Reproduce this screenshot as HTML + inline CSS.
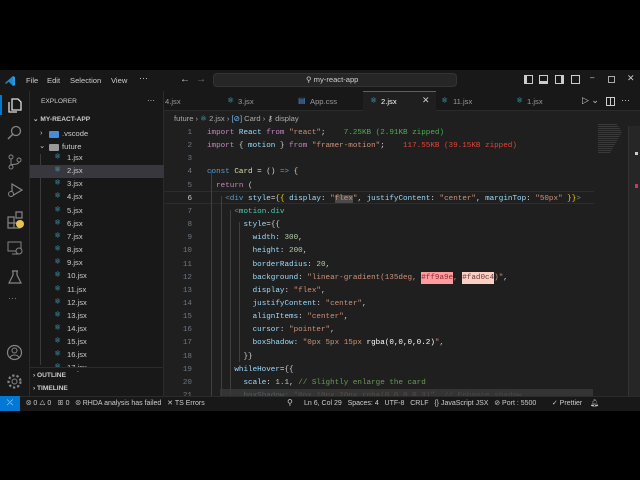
<!DOCTYPE html>
<html><head><meta charset="utf-8"><style>
*{margin:0;padding:0;box-sizing:border-box}
body{width:640px;height:480px;background:#000;position:relative;overflow:hidden;font-family:"Liberation Sans",sans-serif;color:#ccc;font-size:8px}
.a{position:absolute;white-space:pre}
#vs{position:absolute;left:0;top:70px;width:640px;height:341px;background:#1f1f1f;overflow:hidden}
.code{font-family:"Liberation Mono",monospace;font-size:7.6px;color:#d4d4d4}
.k{color:#c586c0}.b{color:#569cd6}.v{color:#9cdcfe}.s{color:#ce9178}.n{color:#b5cea8}.f{color:#dcdcaa}.t{color:#4ec9b0}.c{color:#6a9955}.g{color:#808080}.y{color:#ffd700}
.ln{color:#6e7681;font-family:"Liberation Mono",monospace;font-size:7.6px;text-align:right;width:20px}
.fi{color:#ccc;font-size:7.6px}
.ri{color:#4fc1e0;font-size:8px}
</style></head><body>
<div id="vs">
<div class="a" style="left:0;top:0;width:640px;height:21px;background:#181818"></div>
<svg class="a" style="left:4px;top:5px" width="12" height="12" viewBox="0 0 12 12"><path d="M9 1L4 6l5 5V1zM9 1L1 8l1 1 7-6" fill="#2489ca"/><path d="M9 1l2 1v8l-2 1z" fill="#1f9cf0"/></svg>
<div class="a" style="left:26px;top:6px;font-size:7.6px;color:#ccc">File</div>
<div class="a" style="left:47px;top:6px;font-size:7.6px;color:#ccc">Edit</div>
<div class="a" style="left:70px;top:6px;font-size:7.6px;color:#ccc">Selection</div>
<div class="a" style="left:111px;top:6px;font-size:7.6px;color:#ccc">View</div>
<div class="a" style="left:139px;top:3px;font-size:9px;color:#ccc">···</div>
<div class="a" style="left:180px;top:4px;font-size:10px;color:#ccc">←</div>
<div class="a" style="left:196px;top:4px;font-size:10px;color:#777">→</div>
<div class="a" style="left:213px;top:3px;width:244px;height:14px;background:#262626;border:1px solid #333;border-radius:4px"></div>
<div class="a" style="left:306px;top:5px;font-size:7.6px;color:#ccc">⚲ my-react-app</div>
<div class="a" style="left:524px;top:5px;width:9px;height:9px;border:1px solid #ccc;border-left-width:3px"></div>
<div class="a" style="left:539px;top:5px;width:9px;height:9px;border:1px solid #ccc;border-bottom-width:3px"></div>
<div class="a" style="left:555px;top:5px;width:9px;height:9px;border:1px solid #ccc;border-right-width:3px"></div>
<div class="a" style="left:571px;top:5px;width:9px;height:9px;border:1px solid #ccc"></div>
<div class="a" style="left:590px;top:3px;font-size:8px;color:#ccc">–</div>
<div class="a" style="left:608px;top:6px;width:7px;height:7px;border:1px solid #aaa"></div>
<div class="a" style="left:627px;top:3px;font-size:9px;color:#ccc">✕</div>
<div class="a" style="left:0;top:21px;width:30px;height:305px;background:#181818;border-right:1px solid #2b2b2b"></div>
<div class="a" style="left:0;top:25px;width:2px;height:20px;background:#0078d4"></div>
<svg class="a" style="left:7px;top:27px" width="16" height="16"><path d="M5 2h6l3 3v8H5z M2 5v10h8" stroke="#ddd" fill="none" stroke-width="1.3"/></svg>
<svg class="a" style="left:7px;top:55px" width="16" height="16"><circle cx="9" cy="6" r="4.5" stroke="#858585" fill="none" stroke-width="1.3"/><path d="M6 9l-5 5" stroke="#858585" stroke-width="1.5"/></svg>
<svg class="a" style="left:7px;top:84px" width="16" height="16"><circle cx="4" cy="3" r="2" stroke="#858585" fill="none"/><circle cx="4" cy="13" r="2" stroke="#858585" fill="none"/><circle cx="12" cy="6" r="2" stroke="#858585" fill="none"/><path d="M4 5v6M12 8c0 3-8 2-8 3" stroke="#858585" fill="none"/></svg>
<svg class="a" style="left:7px;top:112px" width="16" height="16"><path d="M5 2l10 6-10 6z" stroke="#858585" fill="none" stroke-width="1.2"/><circle cx="4" cy="12" r="2.5" fill="#181818" stroke="#858585"/></svg>
<svg class="a" style="left:7px;top:141px" width="18" height="18"><path d="M1 6h6v6H1zM7 12h6v5H7zM1 12h6v5H1zM9 1h6v6H9z" stroke="#858585" fill="none" stroke-width="1.2"/><circle cx="13" cy="13" r="4" fill="#e5c453"/></svg>
<svg class="a" style="left:7px;top:170px" width="16" height="16"><rect x="1" y="2" width="13" height="9" stroke="#858585" fill="none"/><path d="M5 14h6" stroke="#858585"/><circle cx="12" cy="11" r="3" fill="#181818" stroke="#858585"/></svg>
<svg class="a" style="left:8px;top:200px" width="14" height="14"><path d="M4 1h6M5 1v4L1 13h12L9 5V1" stroke="#858585" fill="none" stroke-width="1.2"/></svg>
<div class="a" style="left:8px;top:223px;font-size:9px;color:#858585">···</div>
<svg class="a" style="left:6px;top:274px" width="17" height="17"><circle cx="8.5" cy="8.5" r="7" stroke="#858585" fill="none" stroke-width="1.2"/><circle cx="8.5" cy="6.5" r="2.5" stroke="#858585" fill="none"/><path d="M4 14c1-4 8-4 9 0" stroke="#858585" fill="none"/></svg>
<svg class="a" style="left:6px;top:303px" width="17" height="17"><circle cx="8.5" cy="8.5" r="2.5" stroke="#858585" fill="none"/><circle cx="8.5" cy="8.5" r="6" stroke="#858585" fill="none" stroke-width="2.2" stroke-dasharray="2.3 2"/></svg>
<div class="a" style="left:30px;top:21px;width:134px;height:305px;background:#181818;border-right:1px solid #2b2b2b"></div>
<div class="a" style="left:41px;top:28px;font-size:6.6px;color:#ccc">EXPLORER</div>
<div class="a" style="left:147px;top:26px;font-size:8px;color:#ccc">···</div>
<div class="a" style="left:33px;top:45px;font-size:6.6px;color:#ccc;font-weight:bold">⌄ MY-REACT-APP</div>
<div class="a" style="left:40px;top:58px;font-size:7.6px;color:#ccc">›</div>
<div class="a" style="left:49px;top:61px;width:10px;height:7px;background:#4a8bd6;border-radius:1px"></div>
<div class="a fi" style="left:62px;top:59px">.vscode</div>
<div class="a" style="left:39px;top:71px;font-size:7.6px;color:#ccc">⌄</div>
<div class="a" style="left:49px;top:74px;width:10px;height:7px;background:#999;border-radius:1px"></div>
<div class="a fi" style="left:62px;top:72px">future</div>
<div class="a" style="left:40px;top:84px;width:1px;height:211px;background:#3a3a3a"></div>
<div class="a" style="left:30px;top:95px;width:134px;height:13px;background:#37373d"></div>
<div id="files"></div>
<div class="a" style="left:30px;top:297px;width:134px;height:1px;background:#2b2b2b"></div>
<div class="a" style="left:33px;top:302px;font-size:6.6px;color:#ccc;font-weight:bold">› OUTLINE</div>
<div class="a" style="left:33px;top:315px;font-size:6.6px;color:#ccc;font-weight:bold">› TIMELINE</div>
<div class="a" style="left:164px;top:21px;width:476px;height:20px;background:#181818;border-bottom:1px solid #2b2b2b"></div>
<div class="a fi" style="left:165px;top:27px;color:#999">4.jsx</div>
<div class="a ri" style="left:227px;top:26px">⚛</div><div class="a fi" style="left:238px;top:27px;color:#999">3.jsx</div>
<div class="a" style="left:298px;top:26px;font-size:8px;color:#4a8bd6">▤</div><div class="a fi" style="left:310px;top:27px;color:#999">App.css</div>
<div class="a" style="left:363px;top:21px;width:73px;height:20px;background:#1f1f1f;border-top:1px solid #0078d4"></div>
<div class="a ri" style="left:370px;top:26px">⚛</div><div class="a fi" style="left:381px;top:27px;color:#fff">2.jsx</div>
<div class="a" style="left:422px;top:25px;font-size:9px;color:#ccc">✕</div>
<div class="a ri" style="left:441px;top:26px">⚛</div><div class="a fi" style="left:453px;top:27px;color:#999">11.jsx</div>
<div class="a ri" style="left:516px;top:26px">⚛</div><div class="a fi" style="left:527px;top:27px;color:#999">1.jsx</div>
<div class="a" style="left:582px;top:25px;font-size:9px;color:#ccc">▷ ⌄</div>
<div class="a" style="left:606px;top:27px;width:9px;height:9px;border:1px solid #ccc"></div>
<div class="a" style="left:610px;top:27px;width:1px;height:9px;background:#ccc"></div>
<div class="a" style="left:621px;top:25px;font-size:9px;color:#ccc">···</div>
<div class="a fi" style="left:174px;top:44px;color:#aaa">future › <span style="color:#4fc1e0">⚛</span> 2.jsx › <span style="color:#75beff">[⊘]</span> Card › <span style="color:#ccc">⚷</span> display</div>
<div class="a" style="left:164px;top:121px;width:430px;height:13px;border-top:1px solid #2d2d2d;border-bottom:1px solid #2d2d2d"></div>
<div class="a" style="left:211px;top:100px;width:1px;height:226px;background:#404040"></div>
<div class="a" style="left:221px;top:126px;width:1px;height:200px;background:#404040"></div>
<div class="a" style="left:230px;top:140px;width:1px;height:186px;background:#404040"></div>
<div class="a" style="left:239px;top:152px;width:1px;height:140px;background:#404040"></div>
<div id="code"></div>
<div class="a" style="left:220px;top:319px;width:373px;height:7px;background:#3a3a3a;opacity:.8"></div>
<div class="a" style="left:598px;top:53px;width:30px;height:30px;background:repeating-linear-gradient(#1f1f1f 0 1px,#555 1px 2px);opacity:.5;clip-path:polygon(0 0,60% 0,80% 30%,40% 100%,0 100%)"></div>
<div class="a" style="left:628px;top:56px;width:12px;height:270px;background:#262626;border-left:1px solid #333"></div>
<div class="a" style="left:635px;top:82px;width:3px;height:3px;background:#ccc"></div>
<div class="a" style="left:635px;top:114px;width:3px;height:4px;background:#c36"></div>
<div class="a" style="left:0;top:326px;width:640px;height:15px;background:#181818;border-top:1px solid #2b2b2b"></div>
<div class="a" style="left:0;top:326px;width:20px;height:15px;background:#0078d4;color:#fff;font-size:8px;text-align:center;line-height:14px">⤫</div>
<div class="a" style="left:26px;top:329px;font-size:7px;color:#ccc">⊗ 0 △ 0 &nbsp;&nbsp;ꕥ 0 &nbsp;&nbsp;⊗ RHDA analysis has failed &nbsp;&nbsp;✕ TS Errors</div>
<div class="a" style="left:287px;top:328px;font-size:8px;color:#ccc">⚲</div>
<div class="a" style="left:304px;top:329px;font-size:7px;color:#ccc">Ln 6, Col 29 &nbsp;&nbsp;Spaces: 4 &nbsp;&nbsp;UTF-8 &nbsp;&nbsp;CRLF &nbsp;&nbsp;{} JavaScript JSX &nbsp;&nbsp;⊘ Port : 5500 &nbsp;&nbsp;&nbsp;&nbsp;&nbsp;&nbsp;&nbsp;✓ Prettier &nbsp;&nbsp;&nbsp;🔔︎</div>
</div>
<script>
var f="";for(var i=1;i<=17;i++){var y=83+(i-1)*13.15;f+='<div class="a ri" style="left:54px;top:'+(y-1)+'px">⚛</div><div class="a fi" style="left:67px;top:'+y+'px">'+i+'.jsx</div>';}
f+='<div class="a" style="left:30px;top:297px;width:133px;height:4px;background:#181818"></div>';
document.getElementById('files').outerHTML=f;
var L=[
'<span class="k">import</span> <span class="v">React</span> <span class="k">from</span> <span class="s">"react"</span>;    <span style="color:#4caf50">7.25KB (2.91KB zipped)</span>',
'<span class="k">import</span> { <span class="v">motion</span> } <span class="k">from</span> <span class="s">"framer-motion"</span>;    <span style="color:#e2443a">117.55KB (39.15KB zipped)</span>',
'',
'<span class="b">const</span> <span class="f">Card</span> = () <span class="b">=&gt;</span> {',
'  <span class="k">return</span> (',
'    <span class="g">&lt;</span><span class="b">div</span> <span class="v">style</span>=<span class="y">{{</span> <span class="v">display</span>: <span class="s">"<span style="background:#4a4a4a">flex</span>"</span>, <span class="v">justifyContent</span>: <span class="s">"center"</span>, <span class="v">marginTop</span>: <span class="s">"50px"</span> <span class="y">}}</span><span class="g">&gt;</span>',
'      <span class="g">&lt;</span><span class="t">motion.div</span>',
'        <span class="v">style</span>={{',
'          <span class="v">width</span>: <span class="n">300</span>,',
'          <span class="v">height</span>: <span class="n">200</span>,',
'          <span class="v">borderRadius</span>: <span class="n">20</span>,',
'          <span class="v">background</span>: <span class="s">"linear-gradient(135deg, <span style="color:#8a2a30;background:#ff9a9e;padding:2px 0">#ff9a9e</span>, <span style="color:#6a3a30;background:#fad0c4;padding:2px 0">#fad0c4</span>)"</span>,',
'          <span class="v">display</span>: <span class="s">"flex"</span>,',
'          <span class="v">justifyContent</span>: <span class="s">"center"</span>,',
'          <span class="v">alignItems</span>: <span class="s">"center"</span>,',
'          <span class="v">cursor</span>: <span class="s">"pointer"</span>,',
'          <span class="v">boxShadow</span>: <span class="s">"0px 5px 15px <span style="color:#fff">rgba(0,0,0,0.2)</span>"</span>,',
'        }}',
'      <span class="v">whileHover</span>={{',
'        <span class="v">scale</span>: <span class="n">1.1</span>, <span class="c">// Slightly enlarge the card</span>',
'        <span class="v">boxShadow</span>: <span class="s">"0px 10px 20px rgba(0,0,0,0.3)"</span>, <span class="c">// Enhance shadow</span>'];
var c="";for(var j=0;j<L.length;j++){var y=59+j*13.15;c+='<div class="a ln" style="left:172px;top:'+y+'px;'+(j==5?'color:#ccc':'')+'">'+(j+1)+'</div><div class="a code" style="left:207px;top:'+y+'px">'+L[j]+'</div>';}
document.getElementById('code').outerHTML=c;
</script>
</body></html>
